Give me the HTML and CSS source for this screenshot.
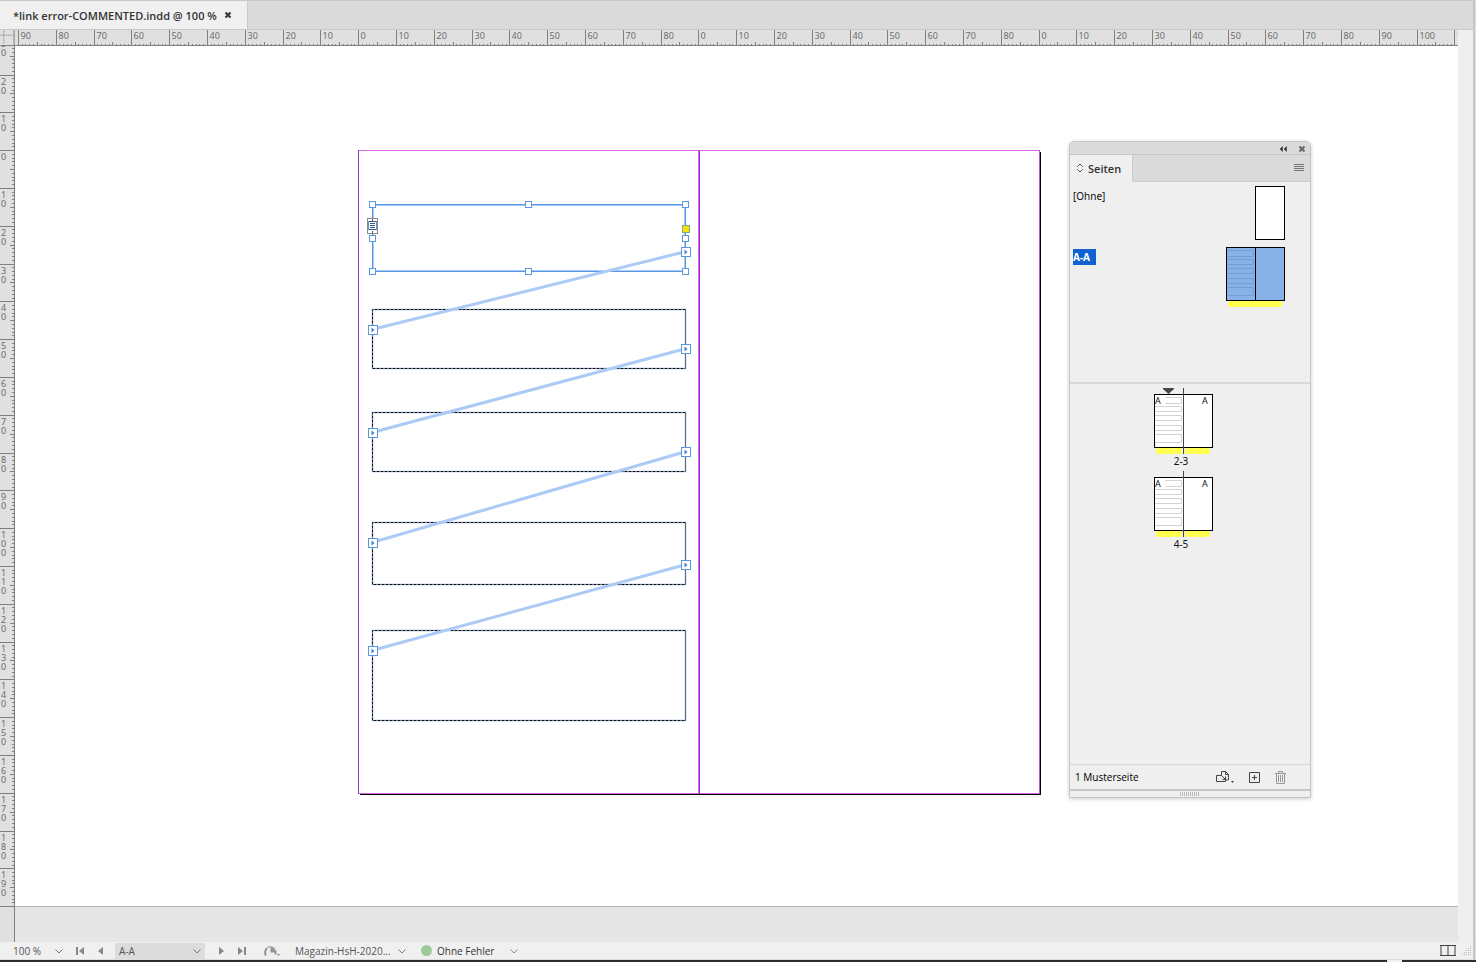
FILE: index.html
```html
<!DOCTYPE html>
<html lang="de">
<head>
<meta charset="utf-8">
<title>link error-COMMENTED.indd</title>
<link rel="stylesheet" href="styles.css">
</head>
<body>
<div class="app">
  <div class="window">
    <header class="tabbar">
      <div class="doc-tab">
        <span class="doc-name">*link error-COMMENTED.indd @ 100 %</span>
        <button class="icon-btn" aria-label="Dokument schließen"><svg width="8" height="8" viewBox="0 0 8 8"><path d="M1.5 1.5l5 5M6.500 1.5l-5 5" stroke="#333" stroke-width="2"/></svg></button>
      </div>
    </header>
    <main class="workspace">
      <svg class="ruler-corner" width="15" height="17" viewBox="0 0 15 17"><path d="M0 5.500H14M3.500 1V15" stroke="#777" stroke-dasharray="1 1"/><path d="M14.500 0V17M0 16.500H15" stroke="#777"/></svg>
      <div class="ruler-h"><svg id="ruler-h" width="100%" height="17"></svg></div>
      <div class="ruler-v"><svg id="ruler-v" width="15" height="100%"></svg></div>
      <section class="canvas">
        <div class="pasteboard"></div>
        <div class="beyond"></div>
        <svg class="spread" width="700" height="660" viewBox="350 140 700 660">
          <rect x="358" y="150" width="682" height="644" fill="#fff"/>
          <path d="M1040.500 152V795M360 794.500H1041" stroke="#000" fill="none"/>
          <path d="M358 150.500H1040M358 793.500H1040" stroke="#d865dc" fill="none"/>
          <path d="M1039.500 150V794" stroke="#b455dc"/>
          <path d="M358.500 150V794" stroke="#8a3fc4"/>
          <path d="M698.500 151V794" stroke="#da62f4"/>
          <path d="M699.500 151V794" stroke="#9a2ccc"/>
          <g class="frame-glow"><rect x="372.500" y="309.500" width="313" height="59"/><rect x="372.500" y="412.500" width="313" height="59"/><rect x="372.500" y="522.500" width="313" height="62"/><rect x="372.500" y="630.500" width="313" height="90"/></g>
          <g class="frame-edge"><path d="M685.500 309.500H372.500V368.500H685.500M685.500 412.500H372.500V471.500H685.500M685.500 522.500H372.500V584.500H685.500M685.500 630.500H372.500V720.500H685.500"/></g>
          <path d="M685.500 309V369M685.500 412V472M685.500 522V585M685.500 630V721" stroke="#66696e"/>
          <rect x="373" y="205" width="312" height="66" fill="none" stroke="#a4cbfa" stroke-width="2"/>
          <rect x="372.500" y="204.500" width="313" height="67" fill="none" stroke="#5c96e0"/>
          <path class="threads" d="M686 251.500L372 329.500M686 348.500L372 432.500M686 451.500L372 542.500M686 564.500L372 650.500"/>
          <g class="handles"><rect x="369.500" y="201.500" width="6" height="6"/><rect x="525.500" y="201.500" width="6" height="6"/><rect x="682.500" y="201.500" width="6" height="6"/><rect x="369.500" y="235.500" width="6" height="6"/><rect x="682.500" y="235.500" width="6" height="6"/><rect x="369.500" y="268.500" width="6" height="6"/><rect x="525.500" y="268.500" width="6" height="6"/><rect x="682.500" y="268.500" width="6" height="6"/></g>
          <rect x="682.500" y="225.500" width="7" height="7" fill="#f8e200" stroke="#7aa49a"/>
          <rect x="367.500" y="218.500" width="10" height="15" fill="#fff" stroke="#888"/>
          <rect x="368.500" y="221.500" width="8" height="8" fill="#fff" stroke="#5c96e0"/>
          <path d="M369 221.500h7M370 223.500h5M370 225.500h5M370 227.500h5M369 229.500h7M372.500 219v2M372.500 231v2" stroke="#3e5878"/>
          <g id="ports" class="ports"></g>
        </svg>
        <aside class="panel">
          <div class="panel-title">
            <button class="icon-btn" aria-label="Minimieren"><svg width="8" height="6" viewBox="0 0 8 6"><path d="M3.500 .5L1 3l2.500 2.500zM7.500 .5L5 3l2.500 2.500z" fill="#333" stroke="#333" stroke-width=".5"/></svg></button>
            <button class="icon-btn" aria-label="Bedienfeld schließen"><svg width="8" height="8" viewBox="0 0 8 8"><path d="M1.500 1.500l5 5M6.500 1.500l-5 5" stroke="#666" stroke-width="2"/></svg></button>
          </div>
          <div class="panel-tabs">
            <button class="panel-tab"><svg width="6" height="10" viewBox="0 0 6 10"><path d="M.5 4V3.500L3 1l2.500 2.500V4M.5 6v.5L3 9l2.500-2.500V6" fill="none" stroke="#555"/></svg>Seiten</button>
            <button class="icon-btn menu" aria-label="Bedienfeldmenü"><svg width="10" height="8" viewBox="0 0 10 8"><path d="M0 .5h10M0 2.500h10M0 4.500h10M0 6.500h10" stroke="#777"/></svg></button>
          </div>
          <div class="masters">
            <div class="master"><span class="master-name">[Ohne]</span>
              <svg width="30" height="54"><rect x=".5" y=".5" width="29" height="53" fill="#fff" stroke="#000"/></svg></div>
            <div class="master"><span class="master-name selected">A-A</span>
              <svg width="59" height="60"><rect x="2" y="54" width="54" height="6" rx="2" fill="#ffff4f"/><rect x=".5" y=".5" width="58" height="53" fill="#88b1e8" stroke="#000"/><path d="M29.500 0v54" stroke="#000"/><path d="M1 3.500h26.500v6H1M1 12.500h26.500v5H1M1 21.500h26.500v5H1M1 31.500h26.500v5H1M1 40.500h26.500v8H1" fill="none" stroke="#739dd6"/></svg></div>
            <svg class="scroll-down" width="8" height="5"><path d="M1 1l3 3 3-3" fill="none" stroke="#e4e4e4"/></svg>
          </div>
          <div class="pages">
            <figure class="thumb">
              <svg width="59" height="66"><path d="M9 0h11v1l-5.500 5L9 1z" fill="#484848"/><rect x="2" y="60" width="26" height="6" rx="2" fill="#ffff4f"/><rect x="31" y="60" width="25" height="6" rx="2" fill="#ffff4f"/><rect x=".5" y="6.500" width="58" height="53" fill="#fff" stroke="#000"/><path d="M11 9.500h16.500v6H11M1 18.500h26.500v5H1M1 27.500h26.500v5H1M1 37.500h26.500v5H1M1 46.500h26.500v8H1" fill="none" stroke="#d3d3d3"/><path d="M29.500 0v66" stroke="#444"/><text x="1" y="16">A</text><text x="48" y="16">A</text></svg>
              <figcaption>2-3</figcaption>
            </figure>
            <figure class="thumb">
              <svg width="59" height="66"><rect x="2" y="60" width="26" height="6" rx="2" fill="#ffff4f"/><rect x="31" y="60" width="25" height="6" rx="2" fill="#ffff4f"/><rect x=".5" y="6.500" width="58" height="53" fill="#fff" stroke="#000"/><path d="M11 9.500h16.500v6H11M1 18.500h26.500v5H1M1 27.500h26.500v5H1M1 37.500h26.500v5H1M1 46.500h26.500v8H1" fill="none" stroke="#d3d3d3"/><path d="M29.500 0v66" stroke="#444"/><text x="1" y="16">A</text><text x="48" y="16">A</text></svg>
              <figcaption>4-5</figcaption>
            </figure>
          </div>
          <div class="panel-foot">
            <span>1 Musterseite</span>
            <button class="icon-btn" aria-label="Seitenformat bearbeiten"><svg width="18" height="14" viewBox="0 0 18 14" fill="none" stroke="#444"><path d="M5.500 5.500H.5v6h9V8.500"/><path d="M5.500 5.500V1.500H9.500l3 3v5.500H9.500M9.500 1.500v3h3"/><path d="M5.500 5.500l4 4M9.500 6.500v3h-3"/><path d="M15 11h3l-1.500 2z" fill="#444" stroke="none"/></svg></button>
            <button class="icon-btn" aria-label="Neue Seite"><svg width="11" height="11" viewBox="0 0 11 11" fill="none" stroke="#444"><path d="M.5.5h10v10H.5zM5.500 3v5M3 5.500h5"/></svg></button>
            <button class="icon-btn" aria-label="Löschen"><svg width="11" height="13" viewBox="0 0 11 13" fill="none" stroke="#999"><path d="M0 2.500h11M3.500 2V.5h4V2M1.500 3v9.500h8V3M3.500 4v7M5.500 4v7M7.500 4v7"/></svg></button>
          </div>
          <div class="grip"><svg width="20" height="4"><path d="M0 2h20" stroke="#bbb" stroke-width="4" stroke-dasharray="1 1"/></svg></div>
        </aside>
      </section>
      <div class="scrollbar"></div>
    </main>
    <footer class="status">
      <label class="pick zoom"><select aria-label="Zoom"><option>100 %</option></select><svg width="8" height="5"><path d="M.5.5L4 4 7.500.5" fill="none" stroke="#777"/></svg></label>
      <button class="icon-btn first" aria-label="Erste Seite"><svg width="8" height="8"><path d="M0 0h2v8H0zM8 0v8L3 4z" fill="#888"/></svg></button>
      <button class="icon-btn prev" aria-label="Vorherige Seite"><svg width="5" height="8"><path d="M5 0v8L0 4z" fill="#888"/></svg></button>
      <label class="pick page"><select aria-label="Seite"><option>A-A</option></select><svg width="8" height="5"><path d="M.5.5L4 4 7.500.5" fill="none" stroke="#777"/></svg></label>
      <button class="icon-btn next" aria-label="Nächste Seite"><svg width="5" height="8"><path d="M0 0v8l5-4z" fill="#888"/></svg></button>
      <button class="icon-btn last" aria-label="Letzte Seite"><svg width="8" height="8"><path d="M6 0h2v8H6zM0 0v8l5-4z" fill="#888"/></svg></button>
      <button class="icon-btn open" aria-label="Öffnen"><svg width="17" height="13" viewBox="0 0 17 13"><path d="M3 11.500A5 5 0 1 1 11.500 5.500" fill="none" stroke="#949494" stroke-width="2"/><path d="M4.500 3.500H8.500V7.500H12V12H4.500z" fill="#f0f0f0"/><path d="M8.500 3.500V7.500H12.500V10.500" fill="none" stroke="#949494" stroke-width="2"/><path d="M9 3l4 4H9z" fill="#949494"/><path d="M14 10h3l-1.500 2z" fill="#888"/></svg></button>
      <label class="pick profile"><select aria-label="Preflight-Profil"><option>Magazin-HsH-2020...</option></select><svg width="8" height="5"><path d="M.5.5L4 4 7.500.5" fill="none" stroke="#777"/></svg></label>
      <span class="dot"></span>
      <label class="pick errors"><select aria-label="Preflight-Status"><option>Ohne Fehler</option></select><svg width="8" height="5"><path d="M.5.5L4 4 7.500.5" fill="none" stroke="#888"/></svg></label>
      <button class="icon-btn split" aria-label="Layoutansicht teilen"><svg width="16" height="11" viewBox="0 0 16 11"><path d="M1 0v11M8 0v11M15 0v11" stroke="#999" stroke-width="2"/><path d="M0 .5h16M0 10.500h16" stroke="#444"/></svg></button>
      <svg width="9" height="9"><path d="M8 .5h1M6 2.500h3M4 4.500h5M2 6.500h7M0 8.500h9" stroke="#bbb" stroke-dasharray="1 1"/></svg>
    </footer>
  </div>
  <div class="taskbar"></div>
</div>
<script src="rulers.js"></script>
</body>
</html>
```
FILE: styles.css
```css
* { box-sizing: border-box; }
body { margin: 0; font-family: "Noto Sans", "Open Sans", sans-serif; font-size: 10px; color: #111; background: #f0f0f0; }
svg { display: block; flex: none; }
button, select { font: inherit; color: inherit; border: 0; background: none; padding: 0; margin: 0; }
.icon-btn { display: flex; align-items: center; justify-content: center; flex: none; }
.app { display: flex; flex-direction: column; height: 100vh; overflow: hidden; }
.window { flex: 1; min-height: 0; display: flex; flex-direction: column; border-right: 1px solid #dcdcdc; box-shadow: inset -2px 0 #c6c6c6; padding-right: 2px; }
.taskbar { height: 2px; background: linear-gradient(90deg, transparent 94%, #f0f0f0 94%, #f0f0f0 95%, transparent 95%), #302c2a; }

.tabbar { height: 30px; display: flex; background: #dadada; border-top: 1px solid #c8c8c8; border-bottom: 1px solid #c8c8c8; }
.doc-tab { display: flex; align-items: center; gap: 7px; padding: 0 15px 0 13px; background: #f0f0f0; border-right: 1px solid #ccc; font: 600 11px "Open Sans", sans-serif; color: #333; }

.workspace { flex: 1; min-height: 0; display: grid; grid-template-columns: 15px minmax(0, 1fr) 15px; grid-template-rows: 16px minmax(0, 1fr); background: #e0e0e0; }
.ruler-corner { height: 16px; }
.ruler-h, .ruler-v { overflow: hidden; min-width: 0; min-height: 0; }
.ruler-h svg { height: 16px; }
.ruler-text { font-size: 9px; fill: #6c6c6c; }
.tick { stroke: #808080; fill: none; }
.scrollbar { grid-column: 3; grid-row: 1 / 3; background: #efefef; }
.canvas { position: relative; grid-column: 2; grid-row: 2; display: flex; flex-direction: column; overflow: hidden; }
.pasteboard { flex: 1; background: #fff; }
.beyond { height: 36px; background: #e6e6e6; border-top: 1px solid #b5b5b5; }
.spread { position: absolute; left: 335px; top: 94px; }
.frame-glow rect { fill: none; stroke: #c8dcf4; stroke-width: 2; }
.frame-edge path { fill: none; stroke: #111; stroke-dasharray: 3 1; }
.threads { fill: none; stroke: #abcaf5; stroke-width: 3; }
.handles rect, .ports rect { fill: #fff; stroke: #5c96e0; }
.ports path { fill: #4a82c8; }

.panel { position: absolute; left: 1054px; top: 95px; width: 242px; display: flex; flex-direction: column; background: #efefef; border: 1px solid #c6c6c6; border-radius: 5px 5px 0 0; box-shadow: 0 1px 4px #0003; overflow: hidden; }
.panel-title { height: 13px; display: flex; align-items: center; justify-content: flex-end; gap: 11px; padding: 2px 4px 0 0; background: #dadada; border-bottom: 1px solid #c6c6c6; }
.panel-tabs { height: 27px; display: flex; align-items: center; justify-content: space-between; padding-right: 6px; background: #dadada; border-bottom: 1px solid #ccc; }
.panel-tab { display: flex; align-items: center; gap: 5px; height: 27px; padding: 0 11px 0 7px; background: #efefef; border-right: 1px solid #ccc; font: 600 11px "Open Sans", sans-serif; color: #333; }
.panel-tabs .menu { align-self: stretch; }
.masters { position: relative; height: 202px; padding: 4px 25px 0 3px; display: flex; flex-direction: column; gap: 7px; border-bottom: 2px solid #d8d8d8; }
.master { display: flex; justify-content: space-between; align-items: flex-start; }
.master-name { margin-top: 2px; line-height: 16px; }
.master-name.selected { background: #1062d0; color: #fff; font-weight: 700; padding-right: 6px; }
.scroll-down { position: absolute; right: 2px; bottom: 3px; }
.pages { height: 380px; padding: 4px 0 0 84px; display: flex; flex-direction: column; align-items: flex-start; }
.thumb { margin: 0; height: 83px; }
.thumb text { font-size: 9px; fill: #111; }
figcaption { text-align: center; line-height: 14px; padding-right: 5px; }
.panel-foot { height: 27px; display: flex; align-items: center; gap: 15px; padding: 0 24px 0 5px; border-top: 1px solid #d6d6d6; border-bottom: 2px solid #c6c6c6; font-family: "Open Sans", sans-serif; color: #000; }
.panel-foot span { flex: 1; }
.grip { height: 6px; display: flex; justify-content: center; align-items: center; }

.status { height: 18px; display: flex; align-items: center; padding: 0 2px 0 13px; background: #f0f0f0; color: #555; border-bottom: 1px solid #ddd; font-family: "Open Sans", sans-serif; }
.pick { position: relative; display: flex; align-items: center; height: 16px; }
.pick select { appearance: none; width: 100%; height: 16px; outline: 0; }
.pick svg { position: absolute; right: 4px; top: 6px; pointer-events: none; }
.zoom { width: 54px; }
.first { margin-left: 9px; }
.prev { margin-left: 14px; }
.page { width: 90px; margin-left: 12px; padding-left: 4px; background: #dcdcdc; }
.next { margin-left: 14px; }
.last { margin-left: 14px; }
.open { margin-left: 17px; }
.profile { width: 115px; margin-left: 15px; }
.dot { width: 11px; height: 11px; margin: 0 5px 0 11px; border-radius: 50%; background: #9ccb98; }
.errors { width: 85px; color: #333; }
.split { margin: 0 6px 0 auto; }
```
FILE: rulers.js
```js
const NS = 'http://www.w3.org/2000/svg';
const MM = 3.78;

function add(parent, name, attrs, text) {
  const el = document.createElementNS(NS, name);
  for (const key in attrs) el.setAttribute(key, attrs[key]);
  if (text !== undefined) el.textContent = text;
  parent.appendChild(el);
  return el;
}

function tickLength(mm, full) {
  if (mm % 10 === 0) return full;
  return mm % 5 === 0 ? 4 : 2;
}

// The horizontal ruler restarts at each page of the spread.
const horizontal = document.getElementById('ruler-h');
let path = 'M0 15.5H1600';
for (let mm = -90; mm <= 320; mm++) {
  const x = Math.floor(343.6 + mm * MM) + 0.5;
  if (x > 1443) break;
  path += `M${x} 16V${16 - tickLength(mm, 16)}`;
  if (mm % 10 === 0) {
    const value = mm < 0 ? -mm : mm < 90 ? mm : mm < 180 ? mm - 90 : mm - 180;
    add(horizontal, 'text', { x: x + 2, y: 9, class: 'ruler-text' }, value);
  }
}
add(horizontal, 'path', { d: path, class: 'tick' });

const vertical = document.getElementById('ruler-v');
path = 'M14.5 0V1200';
for (let mm = -30; mm <= 200; mm++) {
  const y = Math.floor(104.6 + mm * MM) + 0.5;
  path += `M15 ${y}H${14 - tickLength(mm, 14)}`;
  if (mm % 10 === 0 && mm < 200) {
    String(Math.abs(mm)).split('').forEach((digit, i) => {
      add(vertical, 'text', { x: 1, y: y + 9 + i * 9, class: 'ruler-text' }, digit);
    });
  }
}
add(vertical, 'path', { d: path, class: 'tick' });

// In and out ports of the threaded text frames.
const ports = document.getElementById('ports');
[[686, 251], [373, 329], [686, 348], [373, 432], [686, 451], [373, 542], [686, 564], [373, 650]].forEach(([x, y]) => {
  const left = x - 4.5, top = y - 3.5;
  add(ports, 'rect', { x: left, y: top, width: 9, height: 9 });
  add(ports, 'path', { d: `M${left + 3} ${top + 2}l3 2.500l-3 2.500z` });
});
```
